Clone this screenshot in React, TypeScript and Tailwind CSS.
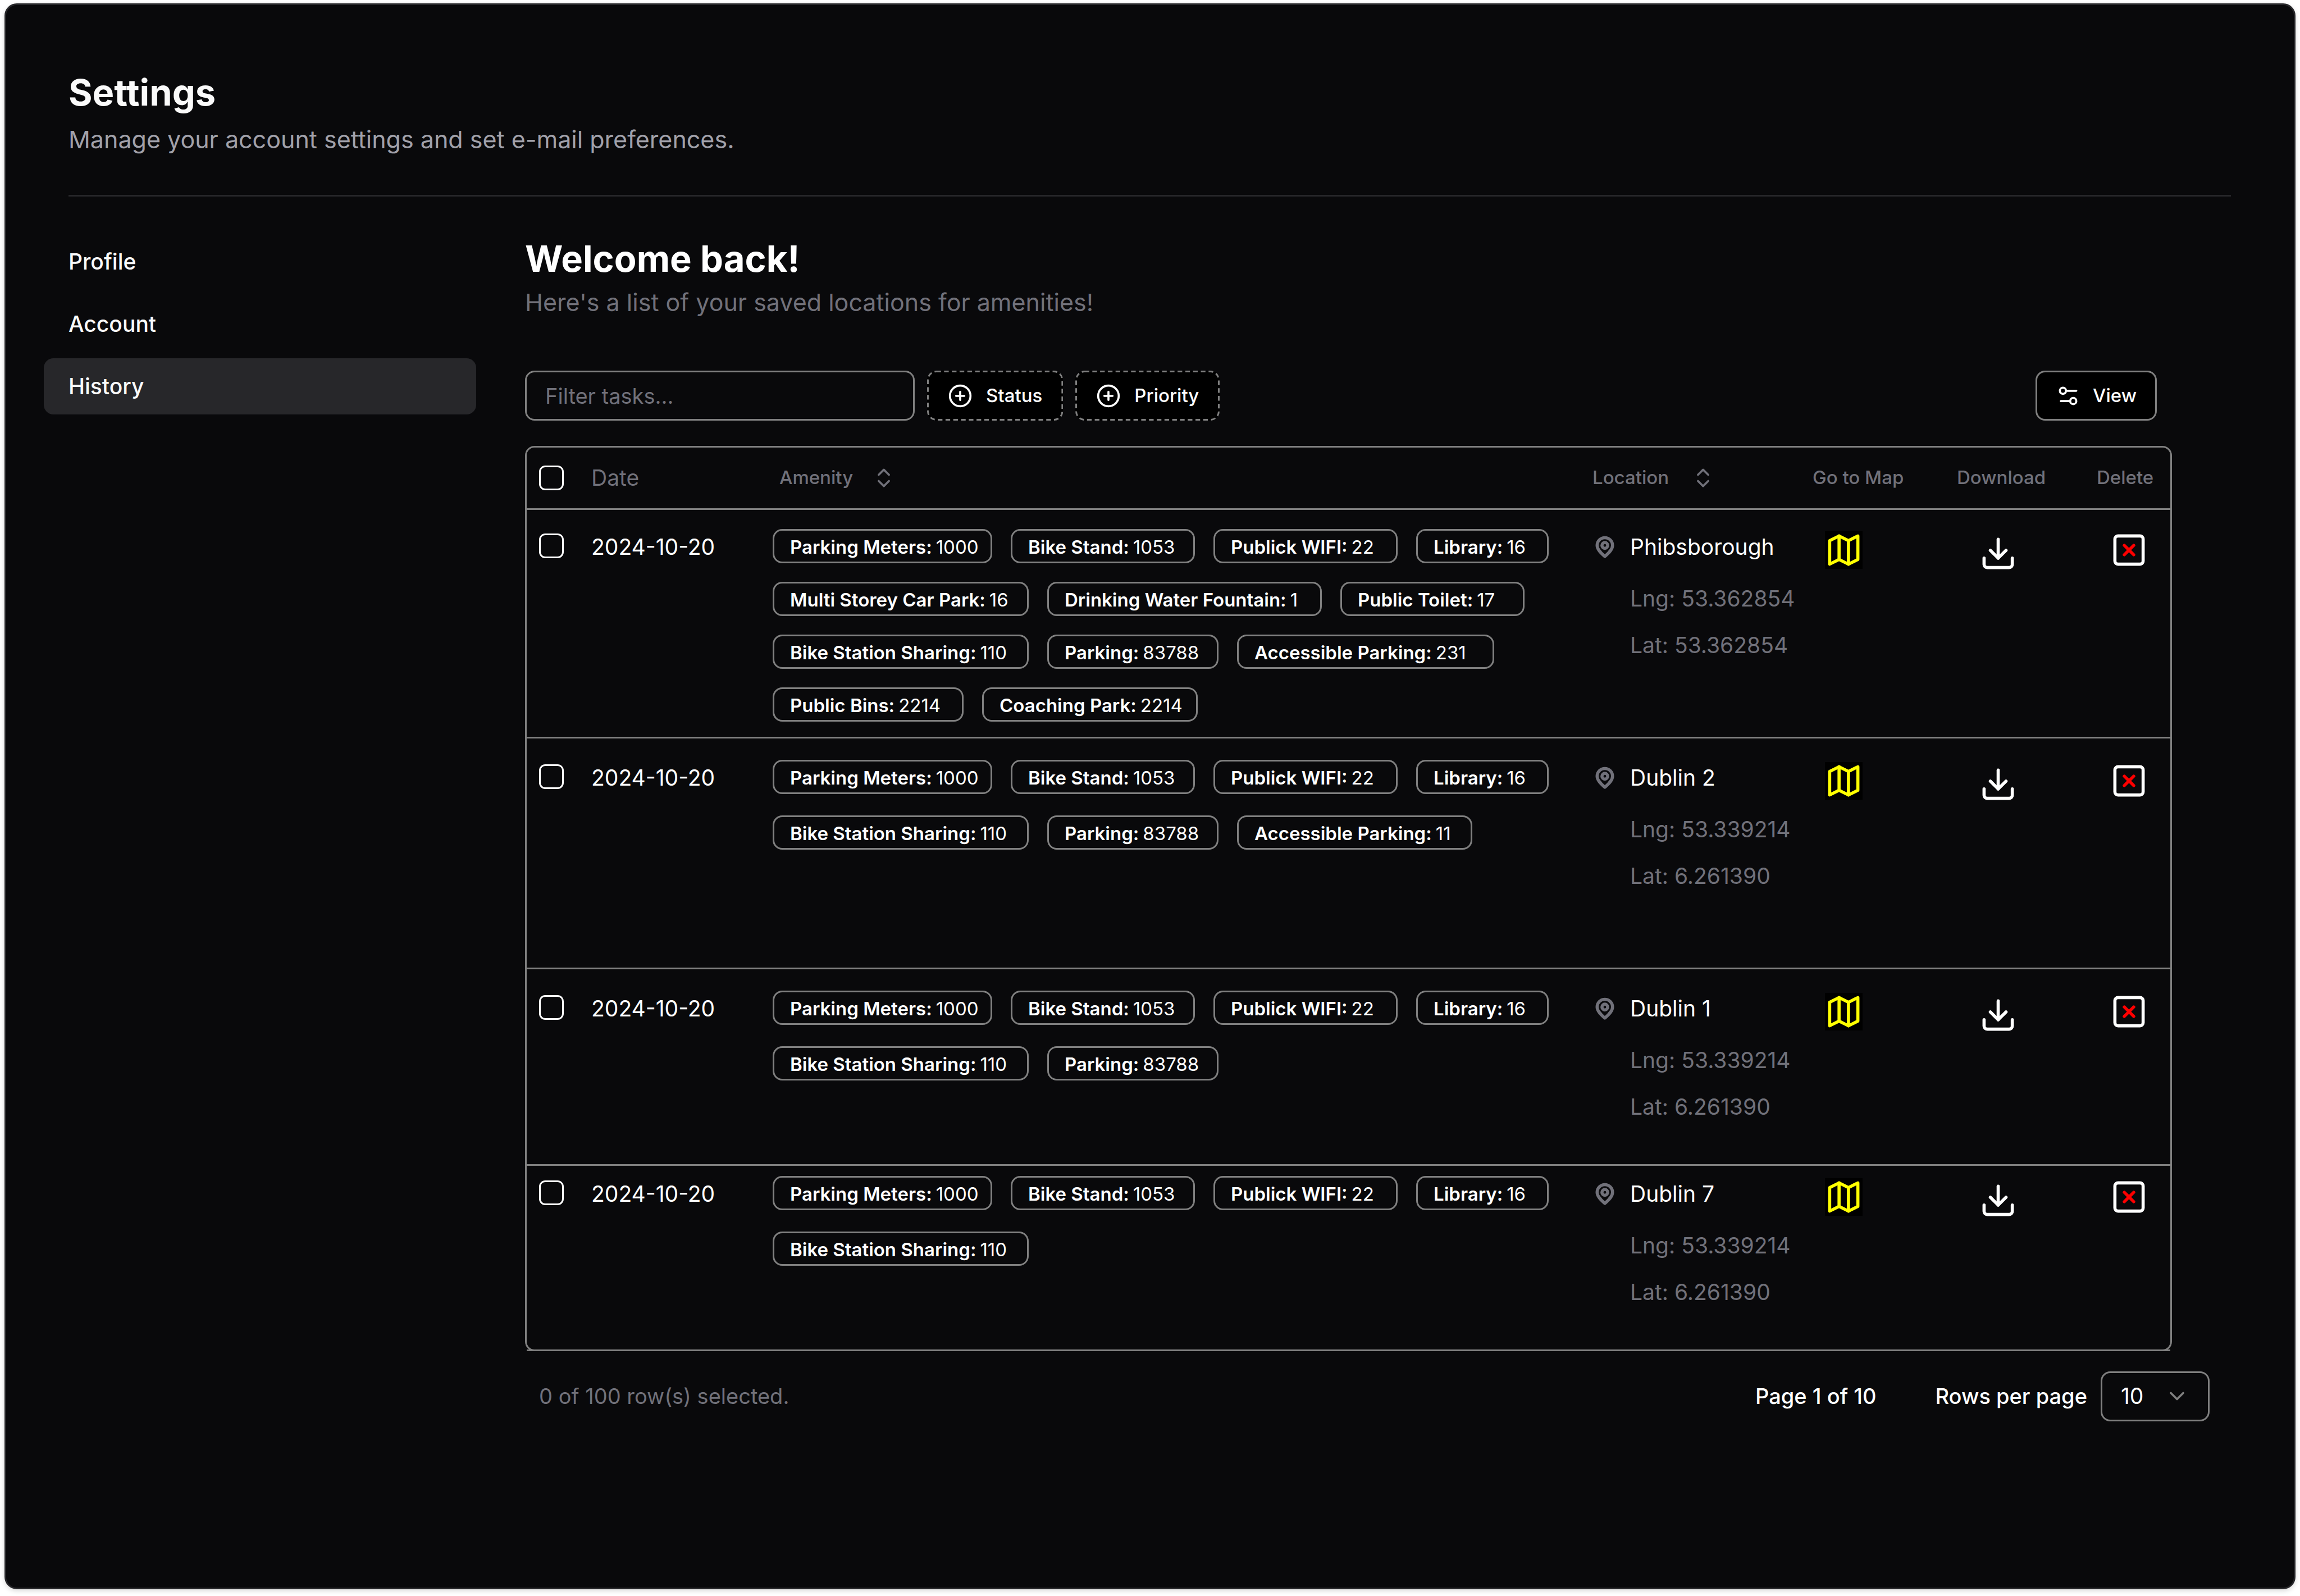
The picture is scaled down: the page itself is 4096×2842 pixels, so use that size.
import React from "react";
import { ChevronDown, ChevronsUpDown, CirclePlus } from "lucide-react";

type Badge = { label: string; value: string; width: string };
type Entry = {
  id: number;
  place: string;
  lng: string;
  lat: string;
  badges: Badge[][];
  rowClass: string;
  cellClass: string;
  badgeGap: string;
};

const parkingMeters: Badge = { label: "Parking Meters:", value: "1000", width: "w-[391px]" };
const bikeStand: Badge = { label: "Bike Stand:", value: "1053", width: "w-[328px]" };
const wifi: Badge = { label: "Publick WIFI:", value: "22", width: "w-[328px]" };
const library: Badge = { label: "Library:", value: "16", width: "w-[236px]" };
const bikeSharing: Badge = { label: "Bike Station Sharing:", value: "110", width: "w-[456px]" };
const parking: Badge = { label: "Parking:", value: "83788", width: "w-[305px]" };

const firstLine = [parkingMeters, bikeStand, wifi, library];

const entries: Entry[] = [
  {
    id: 1,
    place: "Phibsborough",
    lng: "53.362854",
    lat: "53.362854",
    rowClass: "h-[407px]",
    cellClass: "pt-[34px]",
    badgeGap: "gap-y-[33px]",
    badges: [
      firstLine,
      [
        { label: "Multi Storey Car Park:", value: "16", width: "w-[456px]" },
        { label: "Drinking Water Fountain:", value: "1", width: "w-[489px]" },
        { label: "Public Toilet:", value: "17", width: "w-[328px]" },
      ],
      [bikeSharing, parking, { label: "Accessible Parking:", value: "231", width: "w-[458px]" }],
      [
        { label: "Public Bins:", value: "2214", width: "w-[340px]" },
        { label: "Coaching Park:", value: "2214", width: "w-[384px]" },
      ],
    ],
  },
  {
    id: 2,
    place: "Dublin 2",
    lng: "53.339214",
    lat: "6.261390",
    rowClass: "h-[411px]",
    cellClass: "pt-[38px]",
    badgeGap: "gap-y-[38px]",
    badges: [
      firstLine,
      [bikeSharing, parking, { label: "Accessible Parking:", value: "11", width: "w-[419px]" }],
    ],
  },
  {
    id: 3,
    place: "Dublin 1",
    lng: "53.339214",
    lat: "6.261390",
    rowClass: "h-[350px]",
    cellClass: "pt-[38px]",
    badgeGap: "gap-y-[38px]",
    badges: [firstLine, [bikeSharing, parking]],
  },
  {
    id: 4,
    place: "Dublin 7",
    lng: "53.339214",
    lat: "6.261390",
    rowClass: "h-[330px]",
    cellClass: "pt-[18px]",
    badgeGap: "gap-y-[38px]",
    badges: [firstLine, [bikeSharing]],
  },
];

const strokeProps = {
  viewBox: "0 0 24 24",
  fill: "none",
  stroke: "currentColor",
  strokeWidth: 2,
  strokeLinecap: "round" as const,
  strokeLinejoin: "round" as const,
  "aria-hidden": true,
};

function PinIcon() {
  return (
    <svg {...strokeProps} strokeWidth={3} className="size-[44px] shrink-0 text-[#71717a]">
      <path d="M19.5 10.5c0 4.300-4.500 8-7.500 10.700C9 18.500 4.500 14.800 4.500 10.500a7.500 7.500 0 0 1 15 0Z" />
      <circle cx="12" cy="10.500" r="2.800" />
    </svg>
  );
}

function MapIcon() {
  return (
    <svg {...strokeProps} className="size-[67px] bg-black text-[#ffff00]">
      <path d="M3 6l6-3 6 3 6-3v15l-6 3-6-3-6 3z" />
      <path d="M9 3v15M15 6v15" />
    </svg>
  );
}

function DownloadIcon() {
  return (
    <svg {...strokeProps} className="size-[67px] text-white">
      <path d="M21 15v4a2 2 0 0 1-2 2H5a2 2 0 0 1-2-2v-4" />
      <path d="M7 10l5 5 5-5" />
      <path d="M12 15V3" />
    </svg>
  );
}

function DeleteIcon() {
  return (
    <svg {...strokeProps} className="size-[67px] text-white">
      <rect x="3" y="3" width="18" height="18" rx="2" />
      <path d="M15 9l-6 6M9 9l6 6" stroke="#ff0000" />
    </svg>
  );
}

function SlidersIcon() {
  return (
    <svg {...strokeProps} className="size-[44px]">
      <path d="M20 7h-9M14 17H5" />
      <circle cx="17" cy="17" r="3" />
      <circle cx="7" cy="7" r="3" />
    </svg>
  );
}

function FacetButton({ children }: { children: string }) {
  return (
    <button
      type="button"
      className="relative flex h-[89px] items-center gap-[24px] rounded-[17px] bg-black px-[37px] text-[33px] font-medium"
    >
      <svg className="pointer-events-none absolute inset-0 size-full" aria-hidden="true">
        <rect
          x="1.5"
          y="1.5"
          rx="15"
          className="h-[calc(100%-3px)] w-[calc(100%-3px)] fill-none stroke-[#808080] stroke-[3px]"
          strokeDasharray="8.300 5.500"
        />
      </svg>
      <CirclePlus className="size-[44px]" />
      {children}
    </button>
  );
}

function Checkbox({ label }: { label: string }) {
  return (
    <input
      type="checkbox"
      aria-label={label}
      className="block size-[44px] appearance-none rounded-[11px] border-[3px] border-white checked:bg-white"
    />
  );
}

function AmenityBadge({ badge }: { badge: Badge }) {
  return (
    <li
      className={`flex h-[61px] items-center gap-[7px] rounded-[17px] border-[3px] border-[#808080] pt-[2px] pl-[28px] text-[33px] leading-[44px] whitespace-nowrap ${badge.width}`}
    >
      <span className="font-semibold">{badge.label}</span>
      <span>{badge.value}</span>
    </li>
  );
}

function SortButton({ children, gap }: { children: string; gap: string }) {
  return (
    <button type="button" className={`flex items-center ${gap}`}>
      {children}
      <ChevronsUpDown className="size-[44px]" />
    </button>
  );
}

function EntryRow({ entry }: { entry: Entry }) {
  const cell = `border-b-[3px] border-[#808080] p-0 pl-[22px] align-top ${entry.cellClass}`;
  return (
    <tr className={entry.rowClass}>
      <td className={cell}>
        <div className="pt-[8px]">
          <Checkbox label={`Select ${entry.place}`} />
        </div>
      </td>
      <td className={cell}>
        <p className="pt-[10px] leading-[44px]">2024-10-20</p>
      </td>
      <td className={cell}>
        <div className={`flex flex-col ${entry.badgeGap}`}>
          {entry.badges.map((line, i) => (
            <ul key={i} className="flex gap-[33px]">
              {line.map((badge) => (
                <AmenityBadge key={badge.label} badge={badge} />
              ))}
            </ul>
          ))}
        </div>
      </td>
      <td className={cell}>
        <div className="flex items-center gap-[23px] pt-[10px] leading-[44px]">
          <PinIcon />
          {entry.place}
        </div>
        <div className="mt-[28px] pl-[67px] leading-[83px] text-[#71717a]">
          <p>Lng: {entry.lng}</p>
          <p>Lat: {entry.lat}</p>
        </div>
      </td>
      <td className={cell}>
        <a href="#map" aria-label={`Show ${entry.place} on the map`} className="mt-[4px] ml-[22px] block w-[67px]">
          <MapIcon />
        </a>
      </td>
      <td className={cell}>
        <button type="button" aria-label={`Download ${entry.place}`} className="mt-[10px] ml-[40px] block">
          <DownloadIcon />
        </button>
      </td>
      <td className={cell}>
        <button type="button" aria-label={`Delete ${entry.place}`} className="mt-[4px] ml-[24px] block">
          <DeleteIcon />
        </button>
      </td>
    </tr>
  );
}

const navItems = ["Profile", "Account", "History"];

export default function App() {
  const head = "border-b-[3px] border-[#808080] p-0 pl-[22px] text-left";
  return (
    <div className="flex min-h-screen flex-col bg-white px-[8px] pt-[6px] pb-[12px] font-['Inter',sans-serif] text-[39px] text-white">
      <div className="flex-1 rounded-[22px] border-[3px] border-[#27272a] bg-[#09090b] pt-[111px] shadow-[0_3px_8px_rgba(0,0,0,0.15)]">
        <header className="mr-[112px] ml-[111px] border-b-[3px] border-[#27272a] pb-[65px]">
          <h1 className="text-[65px] leading-[89px] font-bold text-[#fafafa]">Settings</h1>
          <p className="mt-[6px] text-[43px] leading-[67px] text-[#a1a1aa]">
            Manage your account settings and set e-mail preferences.
          </p>
        </header>

        <div className="mt-[66px] flex items-start gap-[87px] pr-[150px] pl-[67px]">
          <nav className="flex w-[770px] shrink-0 flex-col gap-[11px]">
            {navItems.map((item) => (
              <a
                key={item}
                href={`#${item.toLowerCase()}`}
                aria-current={item === "History" ? "page" : undefined}
                className="flex h-[100px] items-center rounded-[17px] px-[44px] font-medium text-[#fafafa] aria-[current=page]:bg-[#27272a]"
              >
                {item}
              </a>
            ))}
          </nav>

          <main className="min-w-0 flex-1">
            <h2 className="text-[65px] leading-[89px] font-bold">Welcome back!</h2>
            <p className="text-[43px] leading-[67px] text-[#71717a]">
              Here's a list of your saved locations for amenities!
            </p>

            <div className="mt-[88px] mr-[94px] flex gap-[22px]">
              <input
                type="text"
                aria-label="Filter tasks"
                placeholder="Filter tasks..."
                className="h-[89px] w-[694px] rounded-[17px] border-[3px] border-[#808080] bg-transparent px-[33px] text-[38px] placeholder:text-[#71717a] placeholder:opacity-100"
              />
              <FacetButton>Status</FacetButton>
              <FacetButton>Priority</FacetButton>
              <button
                type="button"
                className="ml-auto flex h-[89px] items-center gap-[22px] rounded-[17px] border-[3px] border-[#808080] bg-black px-[33px] text-[33px] font-medium"
              >
                <SlidersIcon />
                View
              </button>
            </div>

            <div className="mt-[45px] mr-[67px] rounded-[17px] border-[3px] border-[#808080]">
              <table className="mb-[-3px] w-full table-fixed border-separate border-spacing-0">
                <colgroup>
                  <col className="w-[93px]" />
                  <col className="w-[323px]" />
                  <col />
                  <col className="w-[392px]" />
                  <col className="w-[257px]" />
                  <col className="w-[249px]" />
                  <col className="w-[153px]" />
                </colgroup>
                <thead>
                  <tr className="h-[111px] text-[33px] text-[#71717a]">
                    <th className={head}>
                      <Checkbox label="Select all rows" />
                    </th>
                    <th className={`${head} text-[39px] font-normal`}>Date</th>
                    <th className={`${head} font-medium`}>
                      <div className="pl-[12px]">
                        <SortButton gap="gap-[33px]">Amenity</SortButton>
                      </div>
                    </th>
                    <th className={`${head} font-medium`}>
                      <SortButton gap="gap-[39px]">Location</SortButton>
                    </th>
                    <th className={`${head} font-medium`}>Go to Map</th>
                    <th className={`${head} font-medium`}>Download</th>
                    <th className={`${head} font-medium`}>Delete</th>
                  </tr>
                </thead>
                <tbody>
                  {entries.map((entry) => (
                    <EntryRow key={entry.id} entry={entry} />
                  ))}
                </tbody>
              </table>
            </div>

            <footer className="mt-[36px] flex items-center pl-[25px] text-[38px]">
              <p className="mr-auto text-[#71717a]">0 of 100 row(s) selected.</p>
              <p className="mr-[105px] font-medium">Page 1 of 10</p>
              <label htmlFor="rows-per-page" className="mr-[24px] font-medium">
                Rows per page
              </label>
              <div className="relative">
                <select
                  id="rows-per-page"
                  defaultValue="10"
                  className="block h-[89px] w-[194px] appearance-none rounded-[17px] border-[3px] border-[#808080] bg-transparent pl-[33px] text-[39px]"
                >
                  <option>10</option>
                  <option>20</option>
                  <option>50</option>
                </select>
                <ChevronDown className="pointer-events-none absolute top-[22px] right-[36px] size-[44px] text-[#808080]" />
              </div>
            </footer>
          </main>
        </div>
      </div>
    </div>
  );
}
